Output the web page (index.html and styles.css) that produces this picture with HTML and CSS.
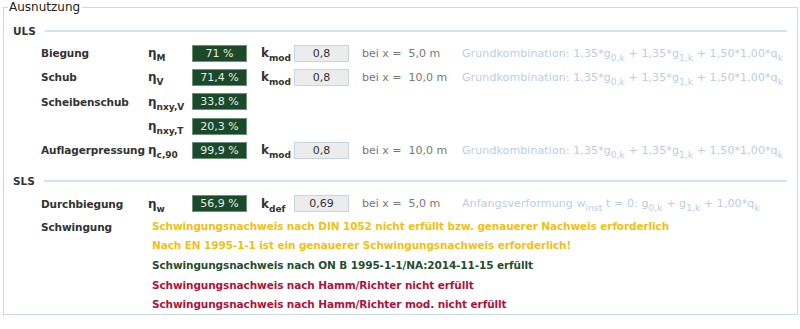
FILE: index.html
```html
<!DOCTYPE html>
<html lang="de">
<head>
    <meta charset="UTF-8">
    <title>Ausnutzung</title>
    <link rel="stylesheet" href="styles.css">
</head>
<body>

<fieldset class="panel">
    <legend>Ausnutzung</legend>

    <!-- Tragfähigkeit -->
    <div class="section-head"><span>ULS</span><div class="rule"></div></div>

    <div class="row">
        <div class="label">Biegung</div>
        <div class="sym">η<sub>M</sub></div>
        <div class="value">71 %</div>
        <div class="ksym">k<sub>mod</sub></div>
        <div class="kbox">0,8</div>
        <div class="pos">bei x =&nbsp; 5,0 m</div>
        <div class="combo">Grundkombination: 1,35*g<sub>0,k</sub> + 1,35*g<sub>1,k</sub> + 1,50*1,00*q<sub>k</sub></div>
    </div>
    <div class="row">
        <div class="label">Schub</div>
        <div class="sym">η<sub>V</sub></div>
        <div class="value">71,4 %</div>
        <div class="ksym">k<sub>mod</sub></div>
        <div class="kbox">0,8</div>
        <div class="pos">bei x =&nbsp; 10,0 m</div>
        <div class="combo">Grundkombination: 1,35*g<sub>0,k</sub> + 1,35*g<sub>1,k</sub> + 1,50*1,00*q<sub>k</sub></div>
    </div>
    <div class="row">
        <div class="label">Scheibenschub</div>
        <div class="sym">η<sub>nxy,V</sub></div>
        <div class="value">33,8 %</div>
    </div>
    <div class="row">
        <div class="label"></div>
        <div class="sym">η<sub>nxy,T</sub></div>
        <div class="value">20,3 %</div>
    </div>
    <div class="row">
        <div class="label">Auflagerpressung</div>
        <div class="sym">η<sub>c,90</sub></div>
        <div class="value">99,9 %</div>
        <div class="ksym">k<sub>mod</sub></div>
        <div class="kbox">0,8</div>
        <div class="pos">bei x =&nbsp; 10,0 m</div>
        <div class="combo">Grundkombination: 1,35*g<sub>0,k</sub> + 1,35*g<sub>1,k</sub> + 1,50*1,00*q<sub>k</sub></div>
    </div>

    <!-- Gebrauchstauglichkeit -->
    <div class="section-head sls"><span>SLS</span><div class="rule"></div></div>

    <div class="row">
        <div class="label">Durchbiegung</div>
        <div class="sym">η<sub>w</sub></div>
        <div class="value">56,9 %</div>
        <div class="ksym">k<sub>def</sub></div>
        <div class="kbox">0,69</div>
        <div class="pos">bei x =&nbsp; 5,0 m</div>
        <div class="combo">Anfangsverformung w<sub>inst</sub> t = 0: g<sub>0,k</sub> + g<sub>1,k</sub> + 1,00*q<sub>k</sub></div>
    </div>
    <div class="row vib">
        <div class="label">Schwingung</div>
        <div class="messages">
            <div class="msg warn">Schwingungsnachweis nach DIN 1052 nicht erfüllt bzw. genauerer Nachweis erforderlich</div>
            <div class="msg warn">Nach EN 1995-1-1 ist ein genauerer Schwingungsnachweis erforderlich!</div>
            <div class="msg ok">Schwingungsnachweis nach ON B 1995-1-1/NA:2014-11-15 erfüllt</div>
            <div class="msg fail">Schwingungsnachweis nach Hamm/Richter nicht erfüllt</div>
            <div class="msg fail">Schwingungsnachweis nach Hamm/Richter mod. nicht erfüllt</div>
        </div>
    </div>
</fieldset>

</body>
</html>
```

FILE: styles.css
```css
body {
    margin: 0;
    background: #fff;
    font-family: "DejaVu Sans", Verdana, sans-serif;
    font-size: 11px;
    color: #333;
}

/* Rahmen um den ganzen Block */
.panel {
    margin: 0 2px 0 3px;
    padding: 0 10px 6px 9px;
    border: 1px solid #c8d9eb;
    height: 307px;
}
.panel legend {
    padding: 0 2px 0 1px;
    margin-left: -5px;
    font-size: 12px;
    color: #222;
}

.section-head {
    display: flex;
    align-items: center;
    height: 20px;
    margin-top: 7px;
    font-weight: bold;
    font-size: 10.5px;
}
.section-head.sls {
    margin-top: 9px;
}
.section-head .rule {
    flex: 1;
    height: 2px;
    margin-left: 9px;
    background: #d4e2f0;
}

.row {
    display: flex;
    align-items: center;
    height: 24.3px;
    padding-left: 28px;
    white-space: nowrap;
}
.label {
    width: 107px;
    font-weight: bold;
    font-size: 10.5px;
    letter-spacing: -0.1px;
}
.sym, .ksym {
    font-weight: bold;
    font-size: 12px;
}
.sym {
    width: 44px;
}
.ksym {
    width: 33px;
    margin-left: 14px;
}
sub {
    font-size: 9px;
    vertical-align: -4px;
    line-height: 0;
}
.value {
    box-sizing: border-box;
    width: 55px;
    height: 17px;
    line-height: 15px;
    text-align: center;
    background: #1b4a2b;
    border: 1px solid #6e8f79;
    color: #e4ece6;
}
.kbox {
    box-sizing: border-box;
    width: 55px;
    height: 17px;
    line-height: 15px;
    text-align: center;
    background: #ececec;
    border: 1px solid #c6d5e4;
    color: #333;
}
.pos {
    width: 100px;
    margin-left: 13px;
    color: #777;
}
.combo {
    color: #b9cde5;
    letter-spacing: 0.1px;
}
.combo sub {
    font-size: 9px;
}

.row.vib {
    height: auto;
    align-items: flex-start;
    margin-top: 1px;
}
.row.vib .label {
    width: 111px;
    line-height: 20px;
}
.msg {
    font-weight: bold;
    font-size: 10.5px;
    letter-spacing: -0.1px;
    line-height: 19.6px;
}
.msg.warn { color: #f4bf10; }
.msg.ok { color: #1f4f30; }
.msg.fail { color: #b0123a; }
```
